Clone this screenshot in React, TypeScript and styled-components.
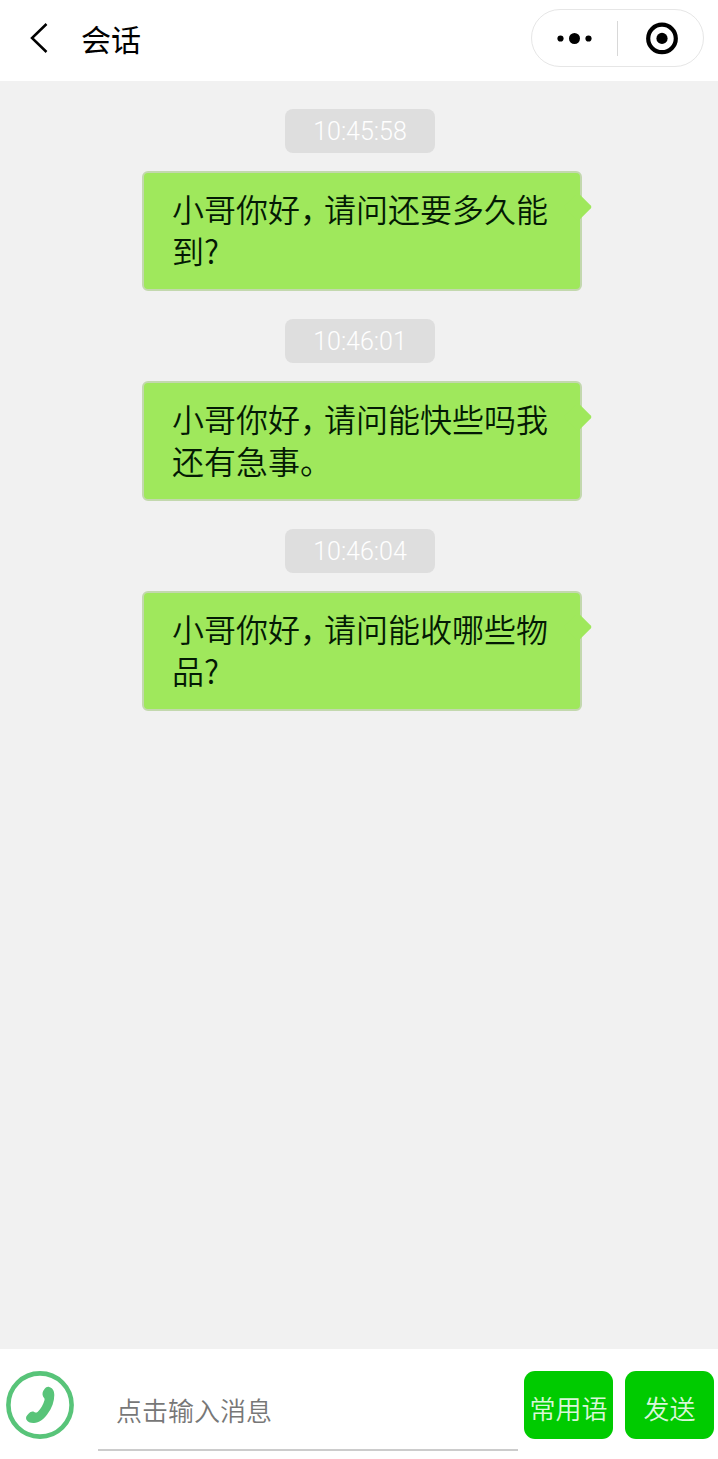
import React from "react";
import styled, { createGlobalStyle } from "styled-components";

const GlobalStyle = createGlobalStyle`
  *, *::before, *::after { box-sizing: border-box; }
  body {
    margin: 0;
    background: #f1f1f1;
    font-family: "Noto Sans CJK SC", sans-serif;
    font-weight: 350;
  }
  button, input { font: inherit; }
`;

const Page = styled.div`
  display: flex;
  flex-direction: column;
  min-height: 100vh;
`;

const Header = styled.header`
  display: flex;
  align-items: center;
  height: 81px;
  padding: 0 14px 5px 24px;
  background: #fff;
`;

const IconButton = styled.button<{ $width: number }>`
  display: flex;
  align-items: center;
  justify-content: center;
  flex: none;
  width: ${(p) => p.$width}px;
  height: 56px;
  padding: 0;
  border: 0;
  background: none;
  color: #000;
`;

const Title = styled.h1`
  flex: 1;
  margin: 0 0 0 25px;
  font-size: 30px;
  line-height: 40px;
  font-weight: 400;
  color: #000;
`;

const Capsule = styled.div`
  display: flex;
  align-items: center;
  height: 58px;
  border: 1px solid #e6e6e6;
  border-radius: 29px;
`;

const CapsuleDivider = styled.span`
  width: 1px;
  height: 35px;
  background: #d8d8d8;
`;

const Conversation = styled.main`
  flex: 1;
  display: flex;
  flex-direction: column;
  gap: 28px;
  padding: 28px 0;
`;

const Message = styled.article`
  display: flex;
  flex-direction: column;
  align-items: center;
  gap: 18px;
`;

const Stamp = styled.time`
  min-width: 150px;
  margin-left: 2px;
  padding: 2px 24px 0;
  border-radius: 8px;
  background: #dedede;
  color: #fff;
  font-family: Roboto, sans-serif;
  font-size: 25px;
  line-height: 42px;
  text-align: center;
`;

const Bubble = styled.p`
  position: relative;
  align-self: stretch;
  margin: 0 136px 0 142px;
  padding: 14px 24px 18px 28px;
  border: 2px solid #c3d8ae;
  border-radius: 6px;
  background: #9fe85c;
  color: #041a04;
  font-size: 32px;
  line-height: 42px;

  &::after {
    content: "";
    position: absolute;
    top: 24px;
    right: -8px;
    width: 20px;
    height: 20px;
    border-radius: 2px;
    background: #9fe85c;
    transform: rotate(45deg);
  }
`;

const Comma = styled.span`
  margin-right: 8px;
  font-feature-settings: "halt";
`;

const Composer = styled.form`
  display: flex;
  align-items: flex-start;
  height: 110px;
  padding: 22px 4px 8px 6px;
  background: #fff;
`;

const CallButton = styled(IconButton)`
  height: 68px;
  color: #58c479;
`;

const MessageInput = styled.input`
  flex: 1;
  min-width: 0;
  height: 80px;
  margin: 0 6px 0 24px;
  padding: 0 18px 2px;
  border: 0;
  border-bottom: 2px solid #ccc;
  background: none;
  font-size: 26px;
  outline: none;

  &::placeholder { color: #777; opacity: 1; }
`;

const ActionButton = styled.button`
  flex: none;
  width: 89px;
  height: 68px;
  padding: 6px 0 0;
  border: 0;
  border-radius: 11px;
  background: #00cb00;
  color: #d9f7d9;
  font-size: 26px;
  line-height: 36px;
  white-space: nowrap;

  & + & { margin-left: 12px; }
`;

const messages = [
  { time: "10:45:58", greeting: "小哥你好", text: "请问还要多久能到?" },
  { time: "10:46:01", greeting: "小哥你好", text: "请问能快些吗我还有急事。" },
  { time: "10:46:04", greeting: "小哥你好", text: "请问能收哪些物品?" },
];

export default function App() {
  return (
    <Page>
      <GlobalStyle />
      <Header>
        <IconButton $width={32} type="button" aria-label="返回">
          <svg width="32" height="32" viewBox="0 0 32 32" fill="none" stroke="currentColor" strokeWidth="2.5">
            <path d="M22.5 2 8 16l14.5 14" />
          </svg>
        </IconButton>
        <Title>会话</Title>
        <Capsule>
          <IconButton $width={85} type="button" aria-label="更多">
            <svg width="36" height="12" viewBox="0 0 36 12" fill="currentColor">
              <circle cx="3.5" cy="6.5" r="3.1" />
              <circle cx="17.5" cy="6.5" r="5.5" />
              <circle cx="31.5" cy="6.5" r="3.1" />
            </svg>
          </IconButton>
          <CapsuleDivider />
          <IconButton $width={85} type="button" aria-label="关闭">
            <svg width="34" height="34" viewBox="0 0 34 34">
              <circle cx="18" cy="17.4" r="13.8" fill="none" stroke="currentColor" strokeWidth="4.2" />
              <circle cx="18" cy="17.4" r="5.6" fill="currentColor" />
            </svg>
          </IconButton>
        </Capsule>
      </Header>
      <Conversation>
        {messages.map((m) => (
          <Message key={m.time}>
            <Stamp>{m.time}</Stamp>
            <Bubble>
              {m.greeting}
              <Comma>，</Comma>
              {m.text}
            </Bubble>
          </Message>
        ))}
      </Conversation>
      <Composer onSubmit={(e) => e.preventDefault()}>
        <CallButton $width={68} type="button" aria-label="拨打电话">
          <svg width="68" height="68" viewBox="0 0 68 68">
            <circle cx="34" cy="34" r="31.6" fill="none" stroke="currentColor" strokeWidth="4.6" />
            <path
              fill="currentColor"
              d="M38.5 18C40 16.2 41.5 15.4 43.2 16C46.5 17 48.3 19.5 48.3 24C48.3 30.5 46 37 41.5 43C37.5 48.5 33 51.8 28 52C24.5 52.2 21.5 50.8 20.3 48.4C19.5 46.4 20.5 44.7 22.5 42.8C24.6 40.6 26.5 40 28.2 41C29.6 41.8 30.6 41.8 31.8 40.7C35 37.8 37.2 33.6 38.4 29.6C38.8 28.2 38.6 27.6 37.9 26.8C36.4 25 36 22.3 37.2 20Z"
            />
          </svg>
        </CallButton>
        <MessageInput type="text" aria-label="消息" placeholder="点击输入消息" />
        <ActionButton type="button">常用语</ActionButton>
        <ActionButton type="submit">发送</ActionButton>
      </Composer>
    </Page>
  );
}
